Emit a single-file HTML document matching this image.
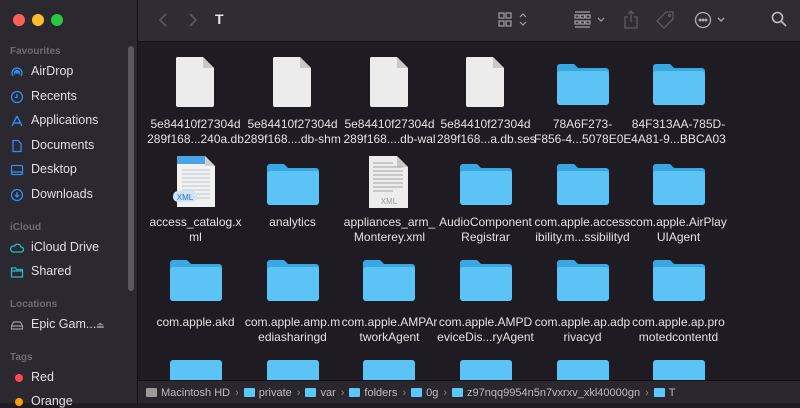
<!DOCTYPE html>
<html><head><style>
*{margin:0;padding:0;box-sizing:border-box}
body{width:800px;height:403px;overflow:hidden;background:#1e1c22;font-family:"Liberation Sans",sans-serif;position:relative;color:#dcdcdc}
#sb{position:absolute;left:0;top:0;width:138px;height:403px;background:#2b2830;border-right:1px solid #111}
.dot{position:absolute;top:14px;width:12px;height:12px;border-radius:50%}
.sec{position:absolute;left:10px;font-size:10px;color:#6e6b72;font-weight:bold}
.it{position:absolute;left:31px;font-size:12.5px;color:#e0dfe2}
.ic{position:absolute;left:10px;width:14px;height:14px}
#tb{position:absolute;left:138px;top:0;width:662px;height:42px;background:#2f2d33;border-bottom:1px solid #111}
.cell{position:absolute;width:97px;text-align:center;font-size:12px;line-height:15px;color:#e2e2e2;white-space:nowrap}
.icon{position:absolute}
#pb{position:absolute;left:138px;top:380px;width:662px;height:23px;background:#2a282e;border-top:1px solid #111;font-size:11px;color:#bdbdbd;padding:6px 0 0 8px;white-space:nowrap}
.pf{display:inline-block;width:11px;height:9px;background:#5ac8fa;margin:0 4px -1px 0;border-radius:1px}
.sep{color:#888;margin:0 5px}
</style></head><body>
<div id="sb">
<div class="dot" style="left:13px;background:#fe5f57"></div>
<div class="dot" style="left:32px;background:#febc2e"></div>
<div class="dot" style="left:51px;background:#28c840"></div>
<div style="position:absolute;left:128px;top:46px;width:6px;height:245px;background:#5a575e;border-radius:3px"></div>
<div class="sec" style="top:46px">Favourites</div>
<svg class="ic" style="top:65px" viewBox="0 0 14 14" fill="none" stroke="#2f8cf0" stroke-width="1.4"><path d="M3 11A5 5 0 1 1 11 11M5 9.5A2.5 2.5 0 1 1 9 9.5"/><circle cx="7" cy="7" r="1" fill="#2f8cf0"/></svg><div class="it" style="top:64px">AirDrop</div>
<svg class="ic" style="top:90px" viewBox="0 0 14 14" fill="none" stroke="#2f8cf0" stroke-width="1.3"><circle cx="7" cy="7" r="5.5"/><path d="M7 4v3.5H5"/></svg><div class="it" style="top:89px">Recents</div>
<svg class="ic" style="top:114px" viewBox="0 0 14 14" fill="none" stroke="#2f8cf0" stroke-width="1.4"><path d="M7 2L2 12M7 2l5 10M3 9h8"/></svg><div class="it" style="top:113px">Applications</div>
<svg class="ic" style="top:139px" viewBox="0 0 14 14" fill="none" stroke="#2f8cf0" stroke-width="1.3"><path d="M3 1.5h5l3 3v8H3z"/></svg><div class="it" style="top:138px">Documents</div>
<svg class="ic" style="top:163px" viewBox="0 0 14 14" fill="none" stroke="#2f8cf0" stroke-width="1.3"><rect x="1.5" y="2.5" width="11" height="9" rx="1"/><path d="M1.5 9h11"/></svg><div class="it" style="top:162px">Desktop</div>
<svg class="ic" style="top:188px" viewBox="0 0 14 14" fill="none" stroke="#2f8cf0" stroke-width="1.3"><circle cx="7" cy="7" r="5.5"/><path d="M7 4v5M5 7l2 2 2-2"/></svg><div class="it" style="top:187px">Downloads</div>
<div class="sec" style="top:222px">iCloud</div>
<svg class="ic" style="top:241px" viewBox="0 0 14 14" fill="none" stroke="#2ab7c8" stroke-width="1.3"><path d="M3 11h8a2.5 2.5 0 0 0 0-5 3.5 3.5 0 0 0-6.5-1A3 3 0 0 0 3 11z"/></svg><div class="it" style="top:240px">iCloud Drive</div>
<svg class="ic" style="top:265px" viewBox="0 0 14 14" fill="none" stroke="#2ab7c8" stroke-width="1.3"><path d="M1.5 3h4l1 1.5h6V12h-11zM1.5 6h11"/></svg><div class="it" style="top:264px">Shared</div>
<div class="sec" style="top:299px">Locations</div>
<svg class="ic" style="top:318px" viewBox="0 0 14 14" fill="none" stroke="#9a989d" stroke-width="1.2"><path d="M1.5 8l2-4h7l2 4v3h-11zM1.5 8h11"/></svg><div class="it" style="top:317px">Epic Gam...</div>
<div style="position:absolute;left:96px;top:320px;color:#8a888d;font-size:9px">⏏</div>
<div class="sec" style="top:352px">Tags</div>
<div style="position:absolute;left:15px;top:374px;width:8px;height:8px;border-radius:50%;background:#fe4b4b"></div><div class="it" style="top:370px">Red</div>
<div style="position:absolute;left:15px;top:398px;width:8px;height:8px;border-radius:50%;background:#fe9f0a"></div><div class="it" style="top:394px">Orange</div>
</div>
<div id="tb">
<svg style="position:absolute;left:20px;top:13px" width="10" height="14" viewBox="0 0 10 14" fill="none" stroke="#5c5a60" stroke-width="1.6"><path d="M8 1L2 7l6 6"/></svg>
<svg style="position:absolute;left:50px;top:13px" width="10" height="14" viewBox="0 0 10 14" fill="none" stroke="#5c5a60" stroke-width="1.6"><path d="M2 1l6 6-6 6"/></svg>
<div style="position:absolute;left:77px;top:11px;font-size:14px;font-weight:bold;color:#e6e6e6">T</div>
<svg style="position:absolute;left:360px;top:12px" width="34" height="16" viewBox="0 0 34 16" fill="none" stroke="#a09ea3" stroke-width="1.2"><rect x="1" y="1" width="5" height="5"/><rect x="8" y="1" width="5" height="5"/><rect x="1" y="9" width="5" height="5"/><rect x="8" y="9" width="5" height="5"/><path d="M22 5l3-3 3 3M22 10l3 3 3-3"/></svg>
<svg style="position:absolute;left:436px;top:11px" width="40" height="18" viewBox="0 0 40 18" fill="none" stroke="#a09ea3" stroke-width="1.2"><path d="M1 1h15M1 16h15"/><rect x="1" y="4" width="4" height="3"/><rect x="6.5" y="4" width="4" height="3"/><rect x="12" y="4" width="4" height="3"/><rect x="1" y="10" width="4" height="3"/><rect x="6.5" y="10" width="4" height="3"/><rect x="12" y="10" width="4" height="3"/><path d="M24 7l3 3 3-3"/></svg>
<svg style="position:absolute;left:486px;top:10px" width="14" height="19" viewBox="0 0 14 19" fill="none" stroke="#5c5a60" stroke-width="1.3"><path d="M7 1v11M4 4l3-3 3 3M4 7H1v11h12V7h-3"/></svg>
<svg style="position:absolute;left:517px;top:11px" width="20" height="18" viewBox="0 0 20 18" fill="none" stroke="#5c5a60" stroke-width="1.3"><path d="M11 1h7v7l-9 9-7-7z"/><circle cx="14.5" cy="4.5" r="1"/></svg>
<svg style="position:absolute;left:556px;top:11px" width="36" height="18" viewBox="0 0 36 18" fill="none" stroke="#b0aeb3" stroke-width="1.3"><circle cx="9" cy="9" r="7.5"/><circle cx="6" cy="9" r=".8" fill="#b0aeb3"/><circle cx="9" cy="9" r=".8" fill="#b0aeb3"/><circle cx="12" cy="9" r=".8" fill="#b0aeb3"/><path d="M24 7l3 3 3-3"/></svg>
<svg style="position:absolute;left:633px;top:11px" width="16" height="17" viewBox="0 0 16 17" fill="none" stroke="#c0bec3" stroke-width="1.6"><circle cx="6.5" cy="6.5" r="5"/><path d="M10 10l5 5"/></svg>
</div>
<div id="main">
<svg class="icon" style="left:175px;top:56px" width="40" height="52" viewBox="0 0 40 52"><path d="M2 1h26l11 11v37a2 2 0 0 1-2 2H3a2 2 0 0 1-2-2V2z" fill="#ececec"/><path d="M28 1v11h11z" fill="#c9c9c9"/></svg>
<svg class="icon" style="left:272px;top:56px" width="40" height="52" viewBox="0 0 40 52"><path d="M2 1h26l11 11v37a2 2 0 0 1-2 2H3a2 2 0 0 1-2-2V2z" fill="#ececec"/><path d="M28 1v11h11z" fill="#c9c9c9"/></svg>
<svg class="icon" style="left:369px;top:56px" width="40" height="52" viewBox="0 0 40 52"><path d="M2 1h26l11 11v37a2 2 0 0 1-2 2H3a2 2 0 0 1-2-2V2z" fill="#ececec"/><path d="M28 1v11h11z" fill="#c9c9c9"/></svg>
<svg class="icon" style="left:465px;top:56px" width="40" height="52" viewBox="0 0 40 52"><path d="M2 1h26l11 11v37a2 2 0 0 1-2 2H3a2 2 0 0 1-2-2V2z" fill="#ececec"/><path d="M28 1v11h11z" fill="#c9c9c9"/></svg>
<svg class="icon" style="left:556px;top:62px" width="54" height="44" viewBox="0 0 54 44"><path d="M1 5a3 3 0 0 1 3-3h14l4 4h28a3 3 0 0 1 3 3v31a3 3 0 0 1-3 3H4a3 3 0 0 1-3-3z" fill="#3aa8e2"/><rect x="1" y="9" width="52" height="34" rx="3" fill="#5cc3f7"/></svg>
<svg class="icon" style="left:652px;top:62px" width="54" height="44" viewBox="0 0 54 44"><path d="M1 5a3 3 0 0 1 3-3h14l4 4h28a3 3 0 0 1 3 3v31a3 3 0 0 1-3 3H4a3 3 0 0 1-3-3z" fill="#3aa8e2"/><rect x="1" y="9" width="52" height="34" rx="3" fill="#5cc3f7"/></svg>
<div class="cell" style="left:147px;top:117px">5e84410f27304d<br>289f168...240a.db</div>
<div class="cell" style="left:244px;top:117px">5e84410f27304d<br>289f168....db-shm</div>
<div class="cell" style="left:341px;top:117px">5e84410f27304d<br>289f168....db-wal</div>
<div class="cell" style="left:437px;top:117px">5e84410f27304d<br>289f168...a.db.ses</div>
<div class="cell" style="left:534px;top:117px">78A6F273-<br>F856-4...5078E0E</div>
<div class="cell" style="left:630px;top:117px">84F313AA-785D-<br>4A81-9...BBCA03</div>
<svg class="icon" style="left:172px;top:155px" width="46" height="54" viewBox="0 0 46 54"><path d="M5 1h28l10 10v41H5z" fill="#f2f2f2"/><path d="M5 1h28v8H5z" fill="#4aa3e8"/><path d="M33 1v10h10z" fill="#d0d0d0"/><g stroke="#b8c4d0" stroke-width="1"><path d="M10 15h28M10 19h28M10 23h28M10 27h28M10 31h28M10 35h28M10 39h28M10 43h28"/></g><rect x="1" y="36" width="24" height="11" rx="5" fill="#cfe4f7"/><text x="13" y="45" font-size="8" text-anchor="middle" fill="#2d6fb5" font-family="Liberation Sans">XML</text></svg>
<svg class="icon" style="left:266px;top:162px" width="54" height="44" viewBox="0 0 54 44"><path d="M1 5a3 3 0 0 1 3-3h14l4 4h28a3 3 0 0 1 3 3v31a3 3 0 0 1-3 3H4a3 3 0 0 1-3-3z" fill="#3aa8e2"/><rect x="1" y="9" width="52" height="34" rx="3" fill="#5cc3f7"/></svg>
<svg class="icon" style="left:368px;top:155px" width="42" height="54" viewBox="0 0 42 54"><path d="M1 1h28l11 11v41H1z" fill="#ececec"/><path d="M29 1v11h11z" fill="#c9c9c9"/><g stroke="#a5a5a5" stroke-width="1"><path d="M5 8h20M5 12h30M5 16h30M5 20h30M5 24h30M5 28h30M5 32h30M5 36h20"/></g><text x="21" y="49" font-size="8" text-anchor="middle" fill="#999" font-family="Liberation Sans">XML</text></svg>
<svg class="icon" style="left:459px;top:162px" width="54" height="44" viewBox="0 0 54 44"><path d="M1 5a3 3 0 0 1 3-3h14l4 4h28a3 3 0 0 1 3 3v31a3 3 0 0 1-3 3H4a3 3 0 0 1-3-3z" fill="#3aa8e2"/><rect x="1" y="9" width="52" height="34" rx="3" fill="#5cc3f7"/></svg>
<svg class="icon" style="left:556px;top:162px" width="54" height="44" viewBox="0 0 54 44"><path d="M1 5a3 3 0 0 1 3-3h14l4 4h28a3 3 0 0 1 3 3v31a3 3 0 0 1-3 3H4a3 3 0 0 1-3-3z" fill="#3aa8e2"/><rect x="1" y="9" width="52" height="34" rx="3" fill="#5cc3f7"/></svg>
<svg class="icon" style="left:652px;top:162px" width="54" height="44" viewBox="0 0 54 44"><path d="M1 5a3 3 0 0 1 3-3h14l4 4h28a3 3 0 0 1 3 3v31a3 3 0 0 1-3 3H4a3 3 0 0 1-3-3z" fill="#3aa8e2"/><rect x="1" y="9" width="52" height="34" rx="3" fill="#5cc3f7"/></svg>
<div class="cell" style="left:147px;top:215px">access_catalog.x<br>ml</div>
<div class="cell" style="left:244px;top:215px">analytics</div>
<div class="cell" style="left:341px;top:215px">appliances_arm_<br>Monterey.xml</div>
<div class="cell" style="left:437px;top:215px">AudioComponent<br>Registrar</div>
<div class="cell" style="left:534px;top:215px">com.apple.access<br>ibility.m...ssibilityd</div>
<div class="cell" style="left:630px;top:215px">com.apple.AirPlay<br>UIAgent</div>
<svg class="icon" style="left:169px;top:258px" width="54" height="44" viewBox="0 0 54 44"><path d="M1 5a3 3 0 0 1 3-3h14l4 4h28a3 3 0 0 1 3 3v31a3 3 0 0 1-3 3H4a3 3 0 0 1-3-3z" fill="#3aa8e2"/><rect x="1" y="9" width="52" height="34" rx="3" fill="#5cc3f7"/></svg>
<svg class="icon" style="left:266px;top:258px" width="54" height="44" viewBox="0 0 54 44"><path d="M1 5a3 3 0 0 1 3-3h14l4 4h28a3 3 0 0 1 3 3v31a3 3 0 0 1-3 3H4a3 3 0 0 1-3-3z" fill="#3aa8e2"/><rect x="1" y="9" width="52" height="34" rx="3" fill="#5cc3f7"/></svg>
<svg class="icon" style="left:362px;top:258px" width="54" height="44" viewBox="0 0 54 44"><path d="M1 5a3 3 0 0 1 3-3h14l4 4h28a3 3 0 0 1 3 3v31a3 3 0 0 1-3 3H4a3 3 0 0 1-3-3z" fill="#3aa8e2"/><rect x="1" y="9" width="52" height="34" rx="3" fill="#5cc3f7"/></svg>
<svg class="icon" style="left:459px;top:258px" width="54" height="44" viewBox="0 0 54 44"><path d="M1 5a3 3 0 0 1 3-3h14l4 4h28a3 3 0 0 1 3 3v31a3 3 0 0 1-3 3H4a3 3 0 0 1-3-3z" fill="#3aa8e2"/><rect x="1" y="9" width="52" height="34" rx="3" fill="#5cc3f7"/></svg>
<svg class="icon" style="left:556px;top:258px" width="54" height="44" viewBox="0 0 54 44"><path d="M1 5a3 3 0 0 1 3-3h14l4 4h28a3 3 0 0 1 3 3v31a3 3 0 0 1-3 3H4a3 3 0 0 1-3-3z" fill="#3aa8e2"/><rect x="1" y="9" width="52" height="34" rx="3" fill="#5cc3f7"/></svg>
<svg class="icon" style="left:652px;top:258px" width="54" height="44" viewBox="0 0 54 44"><path d="M1 5a3 3 0 0 1 3-3h14l4 4h28a3 3 0 0 1 3 3v31a3 3 0 0 1-3 3H4a3 3 0 0 1-3-3z" fill="#3aa8e2"/><rect x="1" y="9" width="52" height="34" rx="3" fill="#5cc3f7"/></svg>
<div class="cell" style="left:147px;top:315px">com.apple.akd</div>
<div class="cell" style="left:244px;top:315px">com.apple.amp.m<br>ediasharingd</div>
<div class="cell" style="left:341px;top:315px">com.apple.AMPAr<br>tworkAgent</div>
<div class="cell" style="left:437px;top:315px">com.apple.AMPD<br>eviceDis...ryAgent</div>
<div class="cell" style="left:534px;top:315px">com.apple.ap.adp<br>rivacyd</div>
<div class="cell" style="left:630px;top:315px">com.apple.ap.pro<br>motedcontentd</div>
<div style="position:absolute;left:170px;top:360px;width:52px;height:20px;background:#5cc3f7;border-radius:3px 3px 0 0"></div>
<div style="position:absolute;left:267px;top:360px;width:52px;height:20px;background:#5cc3f7;border-radius:3px 3px 0 0"></div>
<div style="position:absolute;left:363px;top:360px;width:52px;height:20px;background:#5cc3f7;border-radius:3px 3px 0 0"></div>
<div style="position:absolute;left:460px;top:360px;width:52px;height:20px;background:#5cc3f7;border-radius:3px 3px 0 0"></div>
<div style="position:absolute;left:557px;top:360px;width:52px;height:20px;background:#5cc3f7;border-radius:3px 3px 0 0"></div>
<div style="position:absolute;left:653px;top:360px;width:52px;height:20px;background:#5cc3f7;border-radius:3px 3px 0 0"></div>
</div>
<div id="pb"><span class="pf" style="background:#9a9a9a"></span>Macintosh HD<span class="sep">›</span><span class="pf"></span>private<span class="sep">›</span><span class="pf"></span>var<span class="sep">›</span><span class="pf"></span>folders<span class="sep">›</span><span class="pf"></span>0g<span class="sep">›</span><span class="pf"></span>z97nqq9954n5n7vxrxv_xkl40000gn<span class="sep">›</span><span class="pf"></span>T</div>
</body></html>
